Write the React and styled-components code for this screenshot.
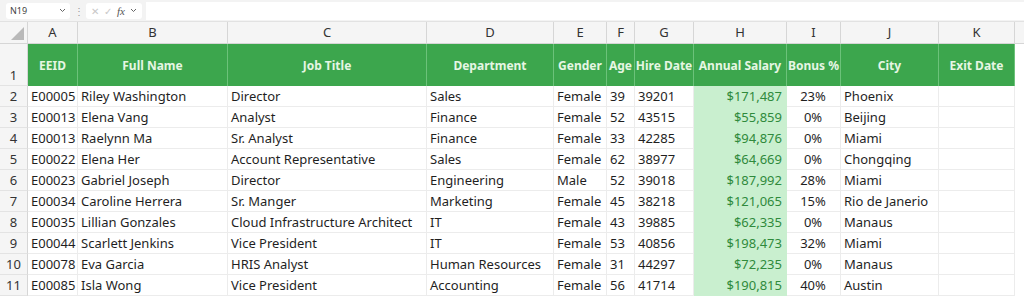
import React from "react";
import styled, { createGlobalStyle } from "styled-components";

const GlobalStyle = createGlobalStyle`
  html, body {
    margin: 0;
    padding: 0;
    background: #ffffff;
    font-family: "Noto Sans", "Open Sans", sans-serif;
  }
`;

const COLS = [50, 150, 199, 127, 53, 28, 59, 93, 54, 98, 76];
const LETTERS = ["A", "B", "C", "D", "E", "F", "G", "H", "I", "J", "K"];
const GRID = `28px ${COLS.map((w) => w + "px").join(" ")} 1fr`;

const HEADERS = [
  "EEID",
  "Full Name",
  "Job Title",
  "Department",
  "Gender",
  "Age",
  "Hire Date",
  "Annual Salary",
  "Bonus %",
  "City",
  "Exit Date",
];

const ALIGN = ["left", "left", "left", "left", "left", "left", "left", "right", "center", "left", "left"];

const ROWS = [
  ["E00005", "Riley Washington", "Director", "Sales", "Female", "39", "39201", "$171,487", "23%", "Phoenix", ""],
  ["E00013", "Elena Vang", "Analyst", "Finance", "Female", "52", "43515", "$55,859", "0%", "Beijing", ""],
  ["E00013", "Raelynn Ma", "Sr. Analyst", "Finance", "Female", "33", "42285", "$94,876", "0%", "Miami", ""],
  ["E00022", "Elena Her", "Account Representative", "Sales", "Female", "62", "38977", "$64,669", "0%", "Chongqing", ""],
  ["E00023", "Gabriel Joseph", "Director", "Engineering", "Male", "52", "39018", "$187,992", "28%", "Miami", ""],
  ["E00034", "Caroline Herrera", "Sr. Manger", "Marketing", "Female", "45", "38218", "$121,065", "15%", "Rio de Janerio", ""],
  ["E00035", "Lillian Gonzales", "Cloud Infrastructure Architect", "IT", "Female", "43", "39885", "$62,335", "0%", "Manaus", ""],
  ["E00044", "Scarlett Jenkins", "Vice President", "IT", "Female", "53", "40856", "$198,473", "32%", "Miami", ""],
  ["E00078", "Eva Garcia", "HRIS Analyst", "Human Resources", "Female", "31", "44297", "$72,235", "0%", "Manaus", ""],
  ["E00085", "Isla Wong", "Vice President", "Accounting", "Female", "56", "41714", "$190,815", "40%", "Austin", ""],
];

const Window = styled.div`
  width: 1024px;
  height: 298px;
  overflow: hidden;
  background: #ffffff;
`;

const FormulaBar = styled.div`
  display: flex;
  align-items: center;
  height: 22px;
  background: #f3f3f3;
  padding: 0 0 0 6px;
  gap: 4px;
  border-bottom: 1px solid #e2e2e2;
  box-sizing: border-box;
`;

const NameBox = styled.div`
  display: flex;
  align-items: center;
  justify-content: space-between;
  width: 64px;
  height: 16px;
  background: #ffffff;
  border-radius: 3px;
  padding: 0 4px;
  box-sizing: border-box;
  font-size: 9px;
  color: #444;
`;

const Dots = styled.span`
  color: #999;
  font-size: 10px;
  width: 8px;
  text-align: center;
`;

const FxBox = styled.div`
  display: flex;
  align-items: center;
  gap: 5px;
  height: 16px;
  padding: 0 5px;
  background: #ffffff;
  border-radius: 3px;
  font-size: 10px;
  color: #c8c8c8;
`;

const Fx = styled.span`
  font-family: "Liberation Serif", serif;
  font-style: italic;
  color: #555;
  font-size: 11px;
`;

const FormulaInput = styled.div`
  flex: 1;
  height: 18px;
  background: #ffffff;
`;

const Sheet = styled.div`
  display: grid;
  grid-template-columns: ${GRID};
  grid-auto-rows: 21px;
  grid-template-rows: 22px 42px;
`;

const ColHead = styled.div`
  background: #f5f5f5;
  border-right: 1px solid ${(p) => (p.$last ? "transparent" : "#d6d6d6")};
  border-bottom: 1px solid #d6d6d6;
  display: flex;
  align-items: flex-end;
  justify-content: center;
  padding-bottom: 2px;
  font-size: 13px;
  color: #333;
  box-sizing: border-box;
`;

const Corner = styled(ColHead)`
  position: relative;
  &::after {
    content: "";
    position: absolute;
    right: 3px;
    bottom: 3px;
    border-style: solid;
    border-width: 0 0 13px 13px;
    border-color: transparent transparent #b9b9b9 transparent;
  }
`;

const RowNum = styled.div`
  background: #f5f5f5;
  border-right: 1px solid #d6d6d6;
  border-bottom: 1px solid #e3e3e3;
  display: flex;
  align-items: ${(p) => (p.$tall ? "flex-end" : "center")};
  justify-content: center;
  font-size: 13px;
  color: #333;
  box-sizing: border-box;
  padding-bottom: ${(p) => (p.$tall ? "1px" : "0")};
`;

const HeadCell = styled.div`
  background: #3ca64d;
  color: #e6f6e3;
  font-weight: 700;
  font-size: 12px;
  display: flex;
  align-items: center;
  justify-content: center;
  border-right: 1px solid #6cc27a;
  white-space: nowrap;
  box-sizing: border-box;
`;

const Cell = styled.div`
  font-size: 13px;
  color: #1f1f1f;
  display: flex;
  align-items: center;
  justify-content: ${(p) =>
    p.$align === "right" ? "flex-end" : p.$align === "center" ? "center" : "flex-start"};
  padding: 0 4px 0 3px;
  border-right: 1px solid #ececec;
  border-bottom: 1px solid #ececec;
  white-space: nowrap;
  overflow: hidden;
  box-sizing: border-box;
  background: ${(p) => (p.$money ? "#c9efcf" : "#ffffff")};
  ${(p) => p.$money && "color: #2f8a3c; border-right-color: #c9efcf; border-bottom-color: #c9efcf;"}
`;

const Blank = styled.div`
  background: ${(p) => (p.$grey ? "#f5f5f5" : "#ffffff")};
  ${(p) => p.$grey && "border-bottom: 1px solid #d6d6d6;"}
`;

const Chevron = () => (
  <svg width="7" height="5" viewBox="0 0 7 5">
    <path d="M1 1 L3.5 3.5 L6 1" fill="none" stroke="#666" strokeWidth="1" />
  </svg>
);

const App = () => {
  return (
    <Window>
      <GlobalStyle />
      <FormulaBar>
        <NameBox>
          <span>N19</span>
          <Chevron />
        </NameBox>
        <Dots>⋮</Dots>
        <FxBox>
          <span>✕</span>
          <span>✓</span>
          <Fx>fx</Fx>
          <Chevron />
        </FxBox>
        <FormulaInput />
      </FormulaBar>
      <Sheet>
        <Corner />
        {LETTERS.map((l) => (
          <ColHead key={l}>{l}</ColHead>
        ))}
        <Blank $grey />

        <RowNum $tall>1</RowNum>
        {HEADERS.map((h) => (
          <HeadCell key={h}>{h}</HeadCell>
        ))}
        <Blank />

        {ROWS.map((row, i) => (
          <React.Fragment key={i}>
            <RowNum>{i + 2}</RowNum>
            {row.map((v, j) => (
              <Cell key={j} $align={ALIGN[j]} $money={j === 7}>
                {v}
              </Cell>
            ))}
            <Blank />
          </React.Fragment>
        ))}
      </Sheet>
    </Window>
  );
};

export default App;
